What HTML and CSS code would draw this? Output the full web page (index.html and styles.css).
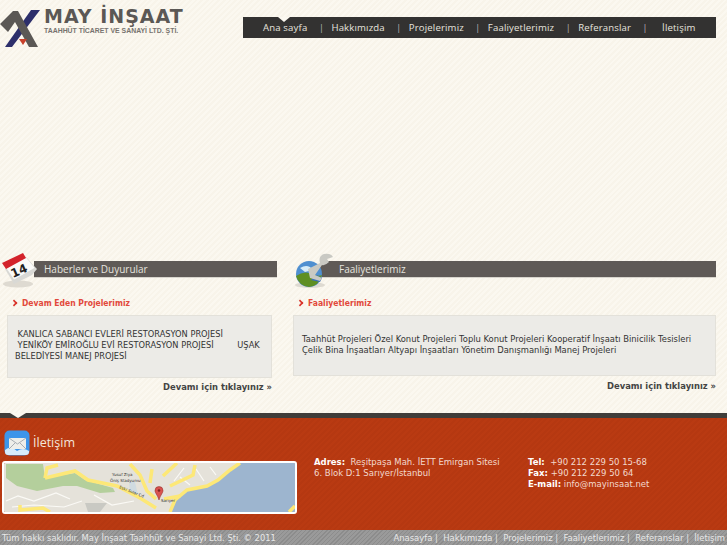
FILE: index.html
```html
<!DOCTYPE html>
<html lang="tr">
<head>
    <meta charset="UTF-8">
    <title>May İnşaat</title>
    <link rel="stylesheet" href="styles.css">
</head>
<body>

    <!-- Logo ve menü -->
    <div class="header">
        <a class="logo" href="#">
            <svg class="logo-mark" width="40" height="38" viewBox="0 0 40 38">
                <path d="M31 0 L40 0 L12 37 L5 37 Z" fill="#2d2f6b"/>
                <path d="M0 14 L13 1 L18 1 L38 37 L29 37 L15 12 L8 22 Z" fill="#5b5855"/>
                <path d="M19 29 L27 29 L23 35 Z" fill="#c8402a"/>
            </svg>
            <span class="logo-text">
                <span class="logo-name">MAY İNŞAAT</span>
                <span class="logo-sub">TAAHHÜT TİCARET VE SANAYİ LTD. ŞTİ.</span>
            </span>
        </a>
        <ul class="menu">
            <li class="active"><a href="#">Ana sayfa</a></li>
            <li class="sep">|</li>
            <li><a href="#">Hakkımızda</a></li>
            <li class="sep">|</li>
            <li><a href="#">Projelerimiz</a></li>
            <li class="sep">|</li>
            <li><a href="#">Faaliyetlerimiz</a></li>
            <li class="sep">|</li>
            <li><a href="#">Referanslar</a></li>
            <li class="sep">|</li>
            <li class="last"><a href="#">İletişim</a></li>
        </ul>
    </div>

    <!-- Orta bölüm -->
    <div class="content">
        <div class="column column-left">
            <div class="bar">
                <svg class="bar-icon" width="40" height="36" viewBox="0 0 40 36">
                    <ellipse cx="18" cy="31" rx="15" ry="3.500" fill="#dedad1"/>
                    <path d="M5 16 L26 5 L37 16 L32 22 L14 31 Z" fill="#d9d9d5"/>
                    <path d="M6 15 L26 4 L35 15 L14 27 Z" fill="#fafaf8" stroke="#cfcfca" stroke-width="0.500"/>
                    <path d="M2 10 L23 0 L26 5 L6 16 Z" fill="#d3232b"/>
                    <text class="cal-day" x="13" y="25" transform="rotate(-24 13 25)">14</text>
                </svg>
                <span class="bar-title">Haberler ve Duyurular</span>
            </div>
            <h3 class="red-title">Devam Eden Projelerimiz</h3>
            <div class="box box-left">
                <p>&nbsp;KANLICA SABANCI EVLERİ RESTORASYON PROJESİ<br>&nbsp;YENİKÖY EMİROĞLU EVİ RESTORASYON PROJESİ &nbsp; &nbsp; &nbsp; &nbsp; UŞAK BELEDİYESİ MANEJ PROJESİ</p>
            </div>
            <a class="more" href="#">Devamı için tıklayınız »</a>
        </div>

        <div class="column column-right">
            <div class="bar">
                <svg class="bar-icon" width="40" height="36" viewBox="0 0 40 36">
                    <ellipse cx="15" cy="32" rx="15" ry="3" fill="#dedad1"/>
                    <circle cx="14" cy="21" r="13" fill="#4f8fd0"/>
                    <path d="M1 23 Q9 17 17 21 Q24 24 27 22 Q24 33 14 34 Q4 33 1 23 Z" fill="#5f8f22"/>
                    <path d="M5 15 Q13 10 18 17 L10 19 Z" fill="#d7ecf7"/>
                    <path d="M16 27 L25 29 L27 25 L21 22 Z" fill="#3d6fb6"/>
                    <path d="M13 16 L25 10 Q23 3 29 1 Q36 0 38 4 L32 6 L34 9 Q30 13 27 12 L20 22 L27 25 L25 28 L15 25 Z" fill="#c9c9c3"/>
                </svg>
                <span class="bar-title">Faaliyetlerimiz</span>
            </div>
            <h3 class="red-title">Faaliyetlerimiz</h3>
            <div class="box box-right">
                <p>Taahhüt Projeleri Özel Konut Projeleri Toplu Konut Projeleri Kooperatif İnşaatı Binicilik Tesisleri Çelik Bina İnşaatları Altyapı İnşaatları Yönetim Danışmanlığı Manej Projeleri</p>
            </div>
            <a class="more" href="#">Devamı için tıklayınız »</a>
        </div>
    </div>

    <!-- İletişim -->
    <div class="contact">
        <div class="contact-map">
            <div class="contact-title">
                <svg width="26" height="26" viewBox="0 0 26 26">
                    <rect x="0.500" y="0.500" width="25" height="25" rx="5" fill="#3d95ea"/>
                    <path d="M1 20 Q7 15 13 21 Q19 17 25 21 L25 22 Q25 25 22 25 L4 25 Q1 25 1 22 Z" fill="#d7ecfb"/>
                    <rect x="5" y="8" width="17" height="11" fill="#eeeeea"/>
                    <path d="M5 8 L13.500 14 L22 8 M5 19 L11 13 M22 19 L16 13" fill="none" stroke="#a7adb3"/>
                </svg>
                <span>İletişim</span>
            </div>
            <div class="map">
                <svg width="291" height="49" viewBox="0 0 291 49">
                    <rect width="291" height="49" fill="#e5e2da"/>
                    <path d="M2 1 L39 1 L41 15 L71 10 L81 17 L109 25 L111 29 L96 30 L73 23 L59 23 L33 28 L13 23 L2 15 Z" fill="#b4cf9c"/>
                    <path d="M81 40 L103 40 L96 49 L84 49 Z" fill="#c9c9c3"/>
                    <path d="M125 19 L131 19 L134 32 L126 27 Z" fill="#d0dbe0"/>
                    <path d="M236 0 L291 0 L291 49 L166 49 L171 37 L183 27 L203 23 L214 17 L226 7 Z" fill="#9db5cf"/>
                    <g fill="none" stroke="#fbfaf6" stroke-width="1.200">
                        <path d="M2 38 L14 33 L30 38 L52 30 L66 36"/>
                        <path d="M8 44 L30 42 L60 44 L78 38"/>
                        <path d="M90 32 L108 42 L130 38"/>
                        <path d="M176 14 L186 22 M192 6 L200 18 M206 4 L212 12 M180 5 L170 18"/>
                    </g>
                    <g fill="none" stroke="#fde877" stroke-width="3.500">
                        <path d="M236 0 L226 7 L214 17 L203 23 L183 27 L171 37 L166 49"/>
                        <path d="M41 15 L43 5 L54 2"/>
                        <path d="M41 15 L71 8 L84 17 L113 23 L136 35 L152 45"/>
                        <path d="M126 1 L136 12 L143 28 L152 36"/>
                        <path d="M146 20 L148 6 M159 13 L173 0"/>
                        <path d="M166 23 L189 12 L191 2"/>
                        <path d="M16 42 L16 47 L39 45 L46 49"/>
                        <path d="M160 36 L176 33"/>
                        <path d="M285 49 L291 43"/>
                    </g>
                    <text class="map-label" x="108" y="13">Yusuf Ziya</text>
                    <text class="map-label" x="106" y="19">Öniş Stadyumu</text>
                    <text class="map-label" x="115" y="25" transform="rotate(22 115 25)">Eski Sular Cd</text>
                    <text class="map-label" x="157" y="39">Sarıyer</text>
                    <path d="M155 37 C153 31 151 30 151 27.500 A4 4 0 0 1 159 27.500 C159 30 157 31 155 37 Z" fill="#d9534f" stroke="#8a2a25" stroke-width="0.500"/>
                    <circle cx="155" cy="27.500" r="1.300" fill="#7d2320"/>
                </svg>
            </div>
        </div>
        <div class="contact-address">
            <b>Adres:</b>&nbsp; Reşitpaşa Mah. İETT Emirgan Sitesi<br>
            6. Blok D:1 Sarıyer/İstanbul
        </div>
        <div class="contact-phone">
            <b>Tel:</b>&nbsp; +90 212 229 50 15-68<br>
            <b>Fax:</b> +90 212 229 50 64<br>
            <b>E-mail:</b> info@mayinsaat.net
        </div>
    </div>

    <!-- Alt bilgi -->
    <div class="footer">
        <span>Tüm hakkı saklıdır. May İnşaat Taahhüt ve Sanayi Ltd. Şti. © 2011</span>
        <span class="footer-links">Anasayfa | &nbsp;Hakkımızda | &nbsp;Projelerimiz | &nbsp;Faaliyetlerimiz | &nbsp;Referanslar | &nbsp;İletişim</span>
    </div>

</body>
</html>
```

FILE: styles.css
```css
html, body { margin: 0; padding: 0; }

body {
    width: 727px;
    height: 545px;
    overflow: hidden;
    font-family: "DejaVu Sans", sans-serif;
    font-size: 8.4px;
    color: #333;
    background-color: #fbf8f0;
    background-image: repeating-linear-gradient(135deg, #fbf8f0 0, #fbf8f0 2px, #f8f4ea 2px, #f8f4ea 4px);
}

a { color: inherit; text-decoration: none; }

/* Logo ve menü */
.header {
    height: 253px;
    display: flex;
    align-items: flex-start;
    justify-content: space-between;
    padding: 0 11px 0 0;
    box-sizing: border-box;
}

.logo {
    display: flex;
    margin: 8px 0 0 0;
}

.logo-mark { flex: none; margin: 2px 4px 0 0; }

.logo-text { display: flex; flex-direction: column; }

.logo-name {
    font-family: "DejaVu Sans", sans-serif;
    font-weight: bold;
    font-size: 19px;
    line-height: 16px;
    letter-spacing: 1px;
    color: #5b5855;
    white-space: nowrap;
}

.logo-sub {
    font-family: "Liberation Sans", sans-serif;
    font-weight: bold;
    font-size: 6.9px;
    line-height: 9px;
    margin-top: 2px;
    color: #77736f;
    white-space: nowrap;
}

.menu {
    position: relative;
    list-style: none;
    display: flex;
    align-items: center;
    gap: 11.5px;
    box-sizing: border-box;
    width: 473px;
    height: 21px;
    margin: 17px 0 0 0;
    padding: 0 0 0 20px;
    background: #333231;
    font-family: "Open Sans", sans-serif;
    font-size: 9.6px;
    letter-spacing: 0.15px;
    color: #e6e4df;
    white-space: nowrap;
}

.menu .sep { width: 1px; color: #bbb; font-size: 9px; }
.menu .last { margin-left: 7px; }

.menu .active::after {
    content: "";
    position: absolute;
    left: 35px;
    top: 0;
    border: 6px solid transparent;
    border-top: 5px solid #fbf8f0;
    border-bottom: 0;
}

/* Orta bölüm */
.content { display: flex; height: 160px; }

.column { position: relative; box-sizing: border-box; }
.column-left { width: 295px; padding-right: 18px; }
.column-right { width: 432px; padding-right: 11px; }

.bar {
    position: relative;
    height: 17px;
    margin: 8px 0 0 0;
    background: #5f5a57;
    color: #e6e4df;
    font-family: "Open Sans", sans-serif;
    font-size: 10px;
    line-height: 16px;
    border-bottom: 1px solid #d8d5cd;
    box-sizing: border-box;
}

.column-left .bar { margin-left: 34px; padding-left: 10px; }
.column-right .bar { margin-left: 25px; padding-left: 19px; }

.bar-icon {
    position: absolute;
    top: -8px;
    left: -34px;
}

.column-right .bar-icon { left: -25px; }

.cal-day {
    font-family: "DejaVu Sans", sans-serif;
    font-weight: bold;
    font-size: 12px;
    fill: #222;
}

.red-title {
    position: relative;
    margin: 19px 0 0 0;
    padding-left: 22px;
    font-family: "DejaVu Sans Condensed", "DejaVu Sans", sans-serif;
    font-size: 8.5px;
    line-height: 12px;
    font-weight: bold;
    color: #e2493b;
}

.column-right .red-title { padding-left: 13px; }

.red-title::before {
    content: "";
    position: absolute;
    left: 11px;
    top: 3px;
    width: 4px;
    height: 4px;
    border-top: 2px solid #d9332a;
    border-right: 2px solid #d9332a;
    transform: rotate(45deg) scale(0.8);
}

.column-right .red-title::before { left: 2px; }

.box {
    box-sizing: border-box;
    margin-top: 6px;
    background: #ecebe7;
    border: 1px solid #e3e1da;
    line-height: 11.2px;
    color: #333;
}

.box p { margin: 0; }

.box-left { height: 63px; margin-left: 7px; margin-right: 5px; padding: 13px 8px 0 7px; font-size: 8.25px; }
.box-right { height: 61px; margin-left: -2px; padding: 18px 8px 0 8px; font-size: 8.4px; }

.more {
    display: block;
    margin-top: 4px;
    text-align: right;
    font-weight: bold;
    line-height: 12px;
    color: #444;
}

.column-left .more { margin-top: 3px; margin-right: 5px; }

/* İletişim */
.contact {
    position: relative;
    display: flex;
    box-sizing: border-box;
    height: 117px;
    background-color: #b93a12;
    background-image: repeating-linear-gradient(135deg, #b93a12 0, #b93a12 2px, #b53811 2px, #b53811 4px);
    border-top: 5px solid #3f3d3a;
    color: #f3d9cd;
    font-size: 8.5px;
    line-height: 11.2px;
}

.contact::before {
    content: "";
    position: absolute;
    left: 10px;
    top: -5px;
    border: 8px solid transparent;
    border-top: 5px solid #fbf8f0;
    border-bottom: 0;
}

.contact b { color: #fff; }

.contact-map { width: 314px; padding: 12px 0 0 2px; box-sizing: border-box; }

.contact-title {
    display: flex;
    align-items: center;
    gap: 3px;
    height: 26px;
    margin: 0 0 5px 2px;
    font-family: "Open Sans", sans-serif;
    font-size: 12.5px;
    color: #f3e6dc;
}

.map {
    box-sizing: border-box;
    width: 295px;
    height: 53px;
    border: 2px solid #fff;
    border-radius: 3px;
    overflow: hidden;
}

.map svg { display: block; }

.map-label {
    font-family: "DejaVu Sans", sans-serif;
    font-size: 4px;
    fill: #333;
}

.contact-address { width: 214px; padding-top: 39px; box-sizing: border-box; }
.contact-phone { padding-top: 39px; }

/* Alt bilgi */
.footer {
    display: flex;
    justify-content: space-between;
    align-items: center;
    height: 15px;
    padding: 0 2px 0 2px;
    background-color: #8c8c8c;
    background-image: repeating-linear-gradient(135deg, #8c8c8c 0, #8c8c8c 1px, #9a9a9a 1px, #9a9a9a 3px);
    color: #e8e8e8;
    font-size: 8.35px;
    white-space: nowrap;
}

.footer-links { font-size: 8.45px; }
```
